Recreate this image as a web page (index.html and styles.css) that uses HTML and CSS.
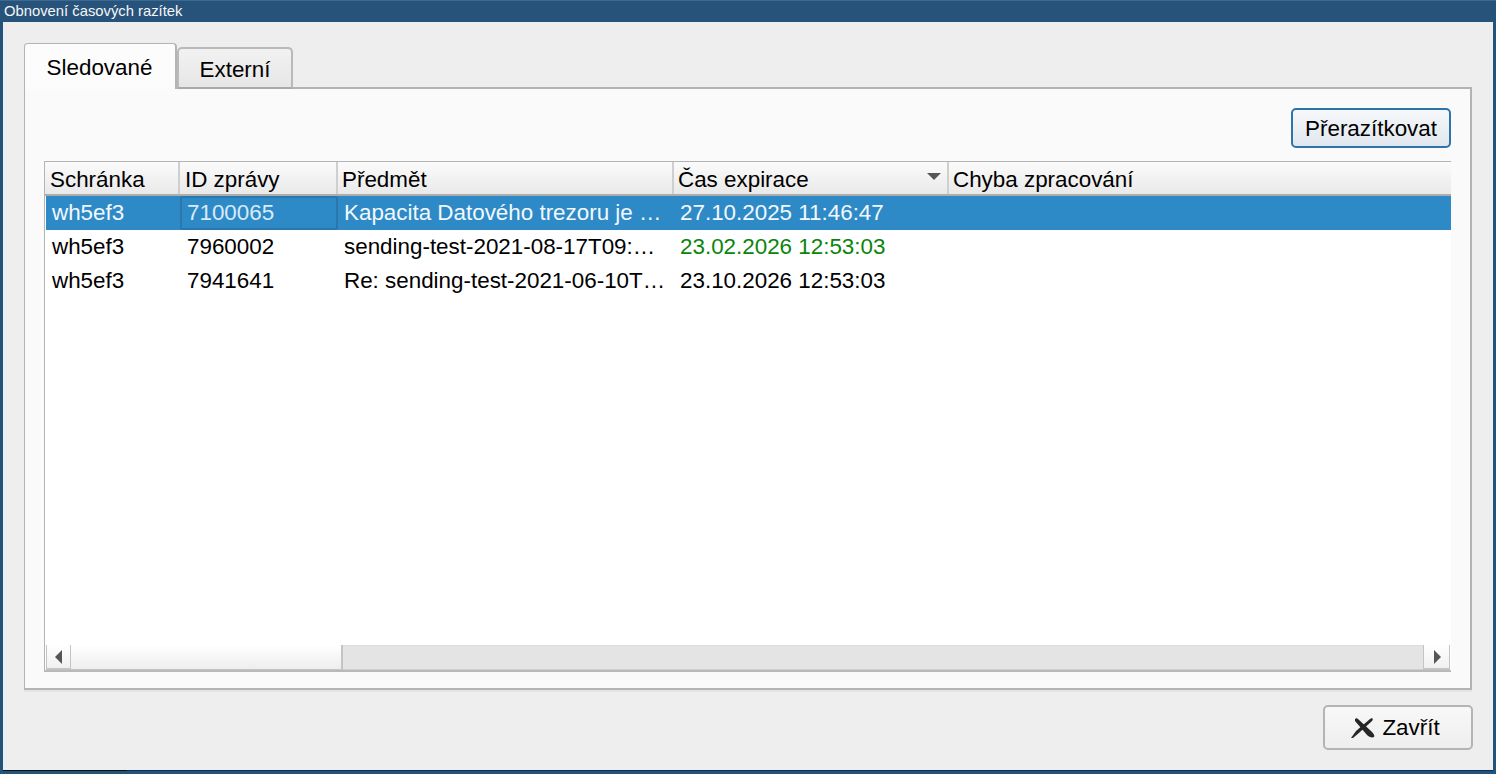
FILE: index.html
```html
<!DOCTYPE html>
<html lang="cs">
<head>
<meta charset="utf-8">
<title>Obnovení časových razítek</title>
<link rel="stylesheet" href="styles.css">
</head>
<body>
<div class="window">
  <div class="titlebar">Obnovení časových razítek</div>
  <div class="content">
    <div class="tabs">
      <div class="tab active">Sledované</div>
      <div class="tab">Externí</div>
    </div>
    <div class="pane">
      <div class="toolbar"><button class="btn primary">Přerazítkovat</button></div>
      <div class="table">
        <div class="row head">
          <div class="hcell c1">Schránka</div>
          <div class="hcell c2">ID zprávy</div>
          <div class="hcell c3">Předmět</div>
          <div class="hcell c4">Čas expirace<span class="sort"></span></div>
          <div class="hcell c5">Chyba zpracování</div>
        </div>
        <div class="rows">
          <div class="row selected">
            <div class="cell c1">wh5ef3</div>
            <div class="cell c2 current">7100065</div>
            <div class="cell c3">Kapacita Datového trezoru je …</div>
            <div class="cell c4">27.10.2025 11:46:47</div>
            <div class="cell c5"></div>
          </div>
          <div class="row">
            <div class="cell c1">wh5ef3</div>
            <div class="cell c2">7960002</div>
            <div class="cell c3">sending-test-2021-08-17T09:…</div>
            <div class="cell c4 green">23.02.2026 12:53:03</div>
            <div class="cell c5"></div>
          </div>
          <div class="row">
            <div class="cell c1">wh5ef3</div>
            <div class="cell c2">7941641</div>
            <div class="cell c3">Re: sending-test-2021-06-10T…</div>
            <div class="cell c4">23.10.2026 12:53:03</div>
            <div class="cell c5"></div>
          </div>
        </div>
        <div class="scrollbar">
          <div class="sb-btn left"><svg width="10" height="14" viewBox="0 0 10 14"><path d="M8 0V14L1 7Z" fill="#555"/></svg></div>
          <div class="sb-thumb"></div>
          <div class="sb-track"></div>
          <div class="sb-btn right"><svg width="10" height="14" viewBox="0 0 10 14"><path d="M2 0V14L9 7Z" fill="#555"/></svg></div>
        </div>
      </div>
    </div>
    <div class="footer">
      <button class="btn close">
        <svg class="x-icon" width="26" height="24" viewBox="0 0 26 24"><path d="M5 3C6 2 7 2 8 3L21 15C24 18 25 20 24 21C22 22 19 21 17 19L5 5Z" fill="#262626"/><path d="M22 2C23 3 23 4 22 5L10 16 3 22 1 22 6 15 20 3Z" fill="#262626"/></svg>
        <span>Zavřít</span>
      </button>
    </div>
  </div>
</div>
</body>
</html>
```
FILE: styles.css
```css
* { box-sizing: border-box; }
html, body { margin: 0; padding: 0; height: 100%; overflow: hidden; }
body { font-family: "Liberation Sans", Arial, sans-serif; font-size: 22.4px; color: #000; background: #24537a; }
.window { width: 1496px; height: 774px; display: flex; flex-direction: column; background: #24537a; padding: 0 3px 3px 3px; border-top: 1px solid #3a6a92; }
.titlebar { height: 21px; margin-left: -3px; padding-left: 4px; font-size: 14.8px; line-height: 20px; color: #f4f7fa; background: #275279; flex: none; }
.content { flex: 1; min-height: 0; position: relative; background: #eeeeee; padding: 21px 21px 0 21px; display: flex; flex-direction: column; border-bottom: 1px solid #122a60; }
.content::after { content: ""; position: absolute; left: 0; bottom: -1px; width: 124px; height: 1px; background: #0a0f14; }
.tabs { display: flex; align-items: flex-end; height: 46px; flex: none; position: relative; z-index: 1; margin-bottom: -2px; }
.tab { height: 42px; width: 116px; padding-top: 8px; text-align: center; line-height: 26px; background: linear-gradient(#f2f2f2, #e6e6e6); border: 2px solid #b9b9b9; border-bottom: 2px solid #a9a9a9; border-radius: 5px 5px 0 0; }
.tab.active { width: 153px; height: 46px; padding: 11px 1px 0 0; background: #fcfcfc; border-width: 1px 2px 0 1px; border-color: #b4b4b4; border-radius: 4px 4px 0 0; }
.pane { height: 603px; flex: none; background: #fafafa; border: 2px solid #b3b3b3; border-width: 2px 2px 2px 1px; box-shadow: 0 2px 0 #e4e4e4; padding: 19px 20px 0 19px; display: flex; flex-direction: column; }
.toolbar { display: flex; justify-content: flex-end; height: 53px; flex: none; }
.btn { font: inherit; color: #000; display: flex; align-items: center; justify-content: center; padding: 0; }
.primary { width: 160px; height: 40px; padding-top: 2px; border: 2px solid #2f74a8; border-radius: 5px; background: linear-gradient(#f6f8fa, #e0e7ee); margin-right: -1px; }
.table { height: 511px; width: 1407px; flex: none; border: 1px solid #b4b4b4; border-right: none; border-bottom: 2px solid #b9b9b9; background: #fff; display: flex; flex-direction: column; }
.row { display: flex; height: 34px; flex: none; }
.head { height: 34px; background: linear-gradient(#fbfbfb, #e9e9e9); border-bottom: 2px solid #adadad; padding-left: 1px; }
.hcell { height: 32px; line-height: 36px; padding-left: 4px; border-right: 2px solid #cfcfcf; position: relative; }
.hcell.c2 { padding-left: 5px; }
.c1 { width: 134px; flex: none; }
.c2 { width: 158px; flex: none; }
.c3 { width: 336px; flex: none; }
.c4 { width: 275px; flex: none; }
.c5 { flex: 1; border-right: none; }
.sort { position: absolute; right: 6px; top: 11px; width: 0; height: 0; border-left: 7px solid transparent; border-right: 7px solid transparent; border-top: 7px solid #555; }
.rows { flex: 1; min-height: 0; padding-left: 1px; }
.cell { height: 34px; line-height: 34px; padding-left: 6px; white-space: nowrap; overflow: hidden; }
.cell.c2 { padding-left: 7px; }
.selected { background: #2e8ac7; color: #f2f8fc; }
.cell.current { border: 2px solid #2a77ad; line-height: 30px; padding-left: 5px; border-radius: 2px; color: #d9ebf7; }
.green { color: #0a850a; }
.scrollbar { height: 25px; display: flex; flex: none; margin-left: 1px; }
.sb-btn { width: 25px; background: linear-gradient(#ffffff, #f0f0f0); display: flex; align-items: center; justify-content: center; flex: none; }
.sb-btn.left { border: 1px solid #c4c4c4; border-top: none; border-bottom: 2px solid #c4c4c4; }
.sb-btn.right { border: 1px solid #c4c4c4; border-top: none; border-bottom: 2px solid #c4c4c4; margin-right: 1px; width: 27px; }
.sb-thumb { width: 272px; flex: none; background: linear-gradient(#ffffff, #eeeeee); border-bottom: 1px solid #c4c4c4; border-right: 2px solid #c4c4c4; }
.sb-track { flex: 1; background: #e4e4e4; border-top: 1px solid #dcdcdc; border-bottom: 1px solid #d0d0d0; }
.footer { flex: 1; display: flex; justify-content: flex-end; padding-top: 15px; margin-right: -1px; }
.close { width: 150px; height: 45px; border: 2px solid #b4b4b4; border-radius: 5px; background: linear-gradient(#f8f8f8, #eeeeee); gap: 6px; padding-right: 6px; }
.x-icon { flex: none; }
```
